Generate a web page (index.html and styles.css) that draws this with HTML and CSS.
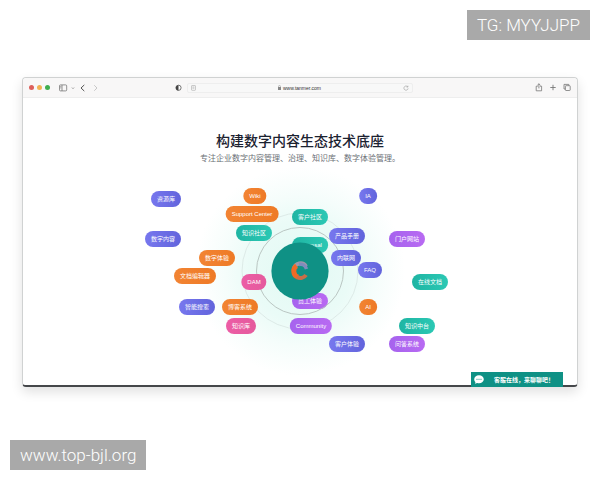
FILE: index.html
```html
<!DOCTYPE html>
<html lang="zh-CN">
<head>
    <meta charset="utf-8">
    <title>构建数字内容生态技术底座</title>
    <link rel="stylesheet" href="styles.css">
</head>
<body>
    <div class="mark mark-top">TG: MYYJJPP</div>

    <div class="window">
        <div class="toolbar">
            <div class="tools">
                <span class="dot red"></span>
                <span class="dot yellow"></span>
                <span class="dot green"></span>
                <svg class="sidebar-icon" width="17" height="8" viewBox="0 0 17 8" fill="none" stroke="#777" stroke-width="0.8">
                    <rect x="0.5" y="0.9" width="7.2" height="6" rx="1"/>
                    <path d="M3 1v6M1.3 2.6h1M1.3 3.9h1M13 3.6l1 1 1-1"/>
                </svg>
                <svg width="20" height="8" viewBox="0 0 20 8" fill="none" stroke-linecap="round">
                    <path d="M5 1.2L2 4l3 2.800" stroke="#555" stroke-width="1"/>
                    <path d="M15.500 1.500L18 4l-2.500 2.500" stroke="#bbb" stroke-width="0.8"/>
                </svg>
            </div>
            <div class="address-wrap">
                <svg width="7" height="8" viewBox="0 0 7 8">
                    <circle cx="3.5" cy="3.8" r="2.6" fill="#fff" stroke="#555" stroke-width="0.8"/>
                    <path d="M3.5 1.2a2.6 2.6 0 0 0 0 5.2z" fill="#444"/>
                </svg>
                <div class="address">
                    <svg width="5" height="6" viewBox="0 0 5 6" fill="none" stroke="#aaa" stroke-width="0.6">
                        <rect x="0.5" y="0.5" width="4" height="4.8" rx="0.6"/>
                        <path d="M1.4 2h2M1.4 3.2h2"/>
                    </svg>
                    <span class="url">
                        <svg width="3" height="5" viewBox="0 0 3 5"><path d="M0 2h3v3H0z" fill="#888"/><path d="M0.6 2V1.3a0.9 0.9 0 0 1 1.8 0V2" fill="none" stroke="#888" stroke-width="0.5"/></svg>
                        www.tanmer.com
                    </span>
                    <svg width="6" height="6" viewBox="0 0 6 6" fill="none" stroke="#999" stroke-width="0.6">
                        <path d="M4.8 2A2.1 2.1 0 1 0 5.1 3.4M4.9 0.7V2.1H3.6"/>
                    </svg>
                </div>
            </div>
            <div class="tools tools-right">
                <svg width="8" height="9" viewBox="0 0 8 9" fill="none" stroke="#777" stroke-width="0.8">
                    <path d="M2.8 3.2H1.2v4.6h5.4V3.2H5M3.9 5.4V0.8M2.4 2.2L3.9 0.8l1.5 1.4"/>
                </svg>
                <svg width="8" height="9" viewBox="0 0 8 9" fill="none" stroke="#777" stroke-width="0.9">
                    <path d="M4 1.8v5.4M1.3 4.5h5.4"/>
                </svg>
                <svg width="8" height="9" viewBox="0 0 8 9" fill="none" stroke="#777" stroke-width="0.8">
                    <path d="M2.3 6H1V1.4h4.8v1.2"/>
                    <rect x="2.4" y="2.7" width="4.8" height="4.8" rx="0.6"/>
                </svg>
            </div>
        </div>

        <div class="page">
            <h1>构建数字内容生态技术底座</h1>
            <p class="intro">专注企业数字内容管理、治理、知识库、数字体验管理。</p>

            <div class="cloud">
                <span class="tag teal proposal">Proposal</span>
                <span class="tag purple staff">员工体验</span>

                <svg class="rings" width="240" height="200" viewBox="-120 -100 240 200" fill="none">
                    <circle r="58" stroke="#d6e3e0" stroke-width="0.7"/>
                    <circle r="43.5" stroke="#b4bfbc" stroke-width="0.9"/>
                    <circle r="28.6" fill="#0f9185"/>
                    <path d="M6 -4.500A6.500 6.500 0 0 0 -6 -2" stroke="#a097a8" stroke-width="4"/>
                    <path d="M-1 -6.500A6.500 6.500 0 0 1 6.500 -2" stroke="#7f8cbc" stroke-width="3.500"/>
                    <path d="M-3.500 -5.200A6.500 6.500 0 0 0 -2 6.200" stroke="#ef6a26" stroke-width="5"/>
                    <path d="M-3 6A6.500 6.500 0 0 0 6 4" stroke="#c96f48" stroke-width="4"/>
                </svg>

                <span class="tag indigo resource">资源库</span>
                <span class="tag orange wiki">Wiki</span>
                <span class="tag orange support">Support Center</span>
                <span class="tag teal know-group">知识社区</span>
                <span class="tag indigo content">数字内容</span>
                <span class="tag orange digital">数字体验</span>
                <span class="tag orange editor">文档编辑器</span>
                <span class="tag pink dam">DAM</span>
                <span class="tag indigo search">智能搜索</span>
                <span class="tag orange blog">博客系统</span>
                <span class="tag pink know-base">知识库</span>
                <span class="tag teal client-group">客户社区</span>
                <span class="tag indigo ia">IA</span>
                <span class="tag indigo manual">产品手册</span>
                <span class="tag indigo intranet">内联网</span>
                <span class="tag indigo faq">FAQ</span>
                <span class="tag purple portal">门户网站</span>
                <span class="tag teal docs">在线文档</span>
                <span class="tag orange ai">AI</span>
                <span class="tag teal know-hub">知识中台</span>
                <span class="tag purple community">Community</span>
                <span class="tag indigo client">客户体验</span>
                <span class="tag purple answers">问答系统</span>
            </div>
        </div>

        <button class="chat" type="button">
            <svg width="10" height="9" viewBox="0 0 10 9">
                <path d="M5 0.3C2.2 0.3 0.2 2 0.2 4.3c0 1.2 0.5 2.2 1.3 2.9L0.8 8.8l2.4-0.7c0.6 0.1 1.2 0.2 1.8 0.2 2.8 0 4.8-1.7 4.8-4S7.8 0.3 5 0.3z" fill="#fff"/>
                <path d="M2.5 4.3h1M4.5 4.3h1M6.5 4.3h1" stroke="#0f9185" stroke-width="1"/>
            </svg>
            <span>客服在线，来聊聊吧！</span>
        </button>
    </div>

    <div class="mark mark-bottom">www.top-bjl.org</div>
</body>
</html>
```
FILE: styles.css
```css
* {
    box-sizing: border-box;
}

body {
    font-family: "Liberation Sans", "Noto Sans CJK SC", sans-serif;
    background-color: #fff;
    margin: 0;
    padding: 10px;
    min-height: 100vh;
    display: flex;
    flex-direction: column;
}

.mark {
    height: 30px;
    padding: 0 10px;
    background-color: #a9a9a9;
    color: #fff;
    font-family: Roboto, sans-serif;
    font-weight: 300;
    font-size: 17px;
    line-height: 30px;
}

.mark-top {
    align-self: flex-end;
}

.mark-bottom {
    align-self: flex-start;
    margin-top: auto;
}

.window {
    position: relative;
    margin: 37px 12px 0;
    border: 1px solid #d0d2d2;
    border-bottom: 2px solid #45474a;
    border-radius: 4px;
    box-shadow: 0 5px 12px rgba(0, 0, 0, 0.12);
}

.toolbar {
    display: grid;
    grid-template-columns: 1fr 250px 1fr;
    align-items: center;
    height: 20px;
    padding: 0 6px;
    background-color: #f8f7f7;
    border-bottom: 1px solid #eeeeee;
    border-radius: 4px 4px 0 0;
}

.tools {
    display: flex;
    align-items: center;
    gap: 3px;
}

.tools-right {
    justify-content: flex-end;
    gap: 6px;
}

.dot {
    width: 5px;
    height: 5px;
    border-radius: 50%;
}

.red {
    background-color: #dd5f5b;
}

.yellow {
    background-color: #f2b353;
}

.green {
    background-color: #3fae4e;
}

.sidebar-icon {
    margin-left: 6px;
}

.address-wrap {
    display: flex;
    align-items: center;
    gap: 5px;
    padding-right: 12px;
}

.address {
    flex: 1;
    display: flex;
    align-items: center;
    justify-content: space-between;
    height: 10px;
    padding: 0 3px;
    background-color: #f8f8f8;
    border: 1px solid #eeeeee;
    border-radius: 2px;
}

.url {
    display: flex;
    align-items: center;
    gap: 2px;
    font-size: 5px;
    line-height: 8px;
    color: #333;
}

.page {
    height: 287px;
    padding-top: 32px;
    text-align: center;
}

h1 {
    margin: 0;
    font-size: 14px;
    font-weight: 500;
    line-height: 22px;
    color: #1b2230;
}

.intro {
    margin: 0;
    font-size: 8px;
    line-height: 14px;
    color: #6b6f76;
}

/* tags float around the centre of the cloud */
.cloud {
    position: relative;
    height: 210px;
    background: radial-gradient(circle at 50% 105px, #e2f9f3 0, #eafbf7 50px, #f5fdfb 75px, rgba(255, 255, 255, 0) 105px);
}

.rings {
    position: absolute;
    left: calc(50% - 120px);
    top: 5px;
}

.tag {
    position: absolute;
    transform: translate(-50%, -50%);
    height: 16px;
    padding: 0 6px;
    border-radius: 8px;
    color: #fff;
    font-size: 6px;
    line-height: 16px;
    white-space: nowrap;
}

.indigo {
    background: linear-gradient(90deg, #7777ee, #6264dc);
}

.orange {
    background: linear-gradient(90deg, #f28433, #ee7a26);
}

.teal {
    background: linear-gradient(90deg, #1fb5a3, #2bc8b4);
}

.pink {
    background: linear-gradient(90deg, #ec5da5, #e55a9d);
}

.purple {
    background: linear-gradient(90deg, #a663ee, #b86af2);
}

.proposal { left: calc(50% + 10px); top: 79px; }
.staff { left: calc(50% + 10px); top: 135px; }
.resource { left: calc(50% - 134px); top: 33px; }
.wiki { left: calc(50% - 45px); top: 30px; }
.support { left: calc(50% - 48px); top: 48px; }
.know-group { left: calc(50% - 46px); top: 67px; }
.content { left: calc(50% - 137px); top: 73px; }
.digital { left: calc(50% - 83px); top: 92px; }
.editor { left: calc(50% - 105px); top: 110px; }
.dam { left: calc(50% - 46px); top: 116px; }
.search { left: calc(50% - 103px); top: 141px; }
.blog { left: calc(50% - 60px); top: 141px; }
.know-base { left: calc(50% - 59px); top: 160px; }
.client-group { left: calc(50% + 10px); top: 51px; }
.ia { left: calc(50% + 68px); top: 30px; }
.manual { left: calc(50% + 47px); top: 70px; }
.intranet { left: calc(50% + 46px); top: 92px; }
.faq { left: calc(50% + 70px); top: 104px; }
.portal { left: calc(50% + 107px); top: 73px; }
.docs { left: calc(50% + 130px); top: 116px; }
.ai { left: calc(50% + 68px); top: 141px; }
.know-hub { left: calc(50% + 117px); top: 160px; }
.community { left: calc(50% + 11px); top: 160px; }
.client { left: calc(50% + 47px); top: 178px; }
.answers { left: calc(50% + 107px); top: 178px; }

.chat {
    position: absolute;
    right: 14px;
    bottom: -2px;
    display: flex;
    align-items: center;
    gap: 10px;
    height: 15px;
    padding: 0 9px 0 3px;
    border: none;
    background-color: #0f9185;
    color: #fff;
    font-family: "Liberation Serif", "Noto Sans CJK SC", serif;
    font-size: 6px;
    font-weight: bold;
    cursor: pointer;
}
```
